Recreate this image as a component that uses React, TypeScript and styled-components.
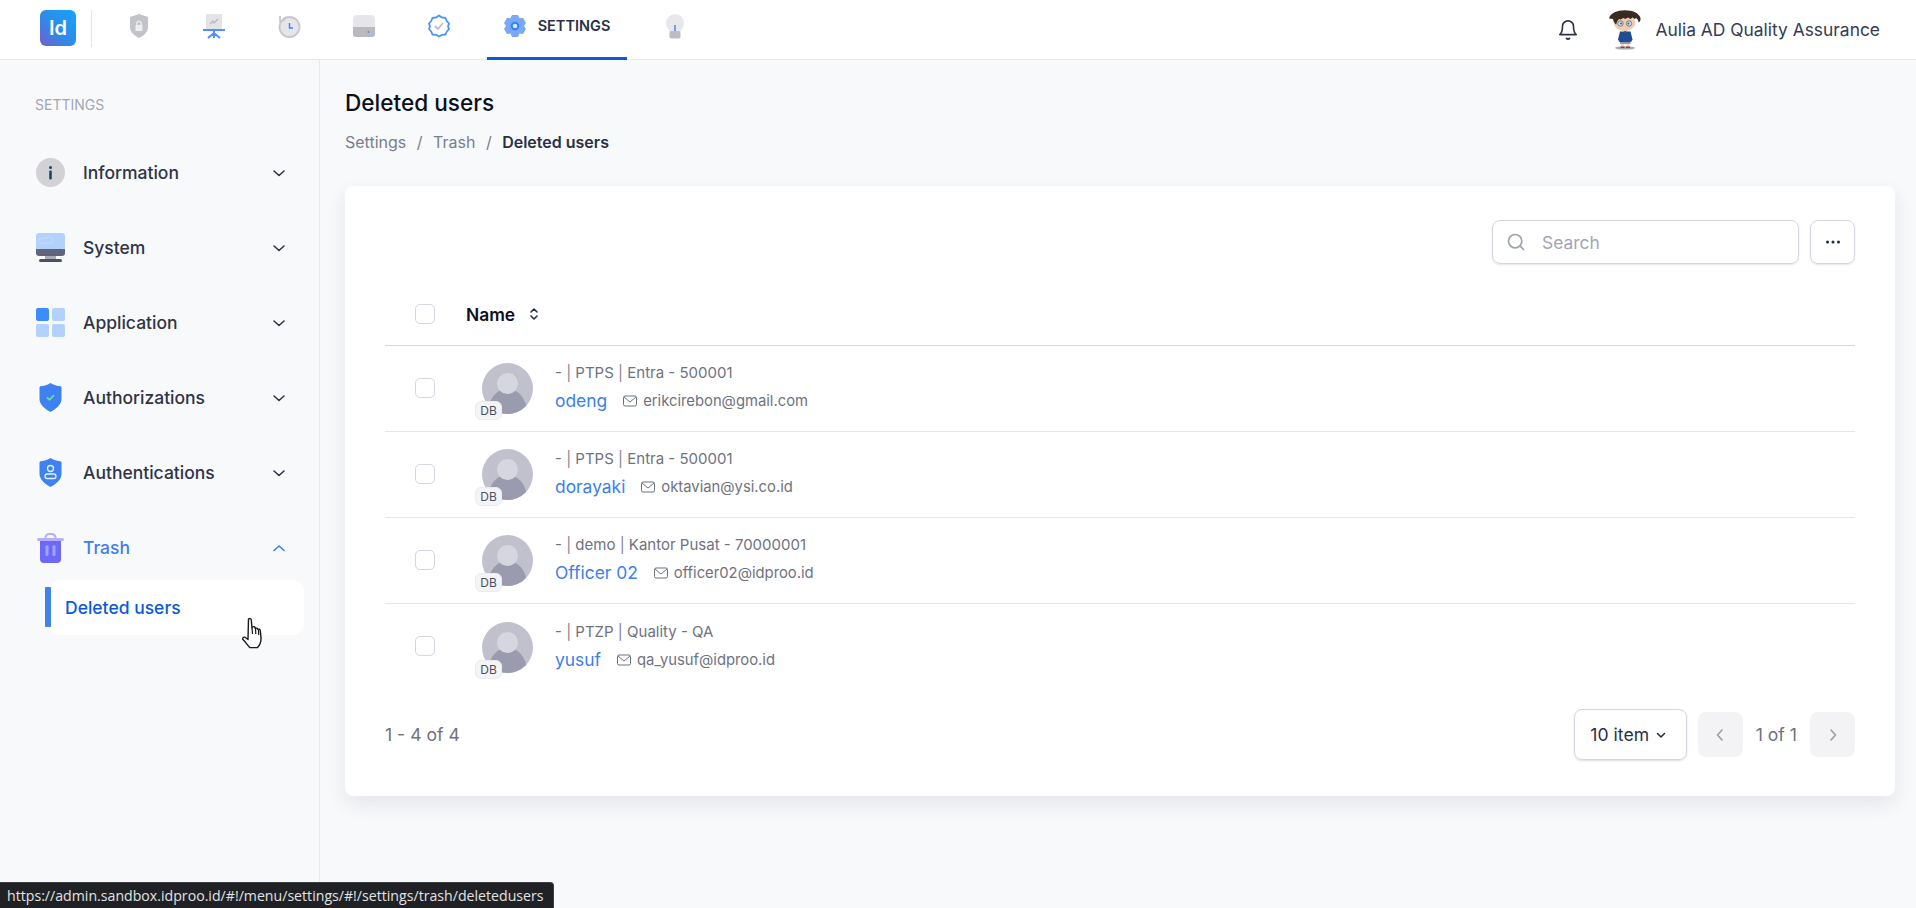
import React from "react";
import styled, { createGlobalStyle } from "styled-components";

const GlobalStyle = createGlobalStyle`
  * { box-sizing: border-box; }
  html, body {
    margin: 0;
    padding: 0;
    height: 100%;
    background: #f8f9fb;
    font-family: "Inter", "Liberation Sans", sans-serif;
    color: #2f3447;
    overflow: hidden;
  }
`;

const users = [
  { name: "odeng", org: "PTPS", unit: "Entra - 500001", email: "erikcirebon@gmail.com" },
  { name: "dorayaki", org: "PTPS", unit: "Entra - 500001", email: "oktavian@ysi.co.id" },
  { name: "Officer 02", org: "demo", unit: "Kantor Pusat - 70000001", email: "officer02@idproo.id" },
  { name: "yusuf", org: "PTZP", unit: "Quality - QA", email: "qa_yusuf@idproo.id" },
];

const Chevron = ({ up }: { up?: boolean }) => (
  <svg width="20" height="20" viewBox="0 0 20 20" fill="none" stroke="currentColor" strokeWidth="1.6" strokeLinecap="round" strokeLinejoin="round">
    <path d={up ? "M5 12.5 10 8l5 4.5" : "M5 8l5 4.5L15 8"} />
  </svg>
);

const ShieldTopIcon = () => (
  <svg width="22" height="26" viewBox="0 0 22 26">
    <path d="M11 1 20 4v10c0 5-4 8.500-9 11C6 22.500 2 19 2 14V4z" fill="#c2c3c9" />
    <path d="M7.500 12h7v6h-7z" fill="#eeeef1" />
    <path d="M8.800 12V10.500a2.200 2.200 0 0 1 4.400 0V12" fill="none" stroke="#eeeef1" strokeWidth="1.300" />
  </svg>
);

const BoardIcon = () => (
  <svg width="22" height="26" viewBox="0 0 22 26">
    <rect x="3" y="1" width="16" height="15" fill="#e4e4e7" />
    <path d="M7 11l3-3 1 2 4-4" fill="none" stroke="#b5b5bb" strokeWidth="1.300" />
    <rect x="0" y="16" width="22" height="2" fill="#4a90ff" />
    <path d="M11 18v3M11 20 5 25M11 20l6 5M11 21v4" stroke="#4a90ff" strokeWidth="2" fill="none" />
  </svg>
);

const ClockIcon = () => (
  <svg width="24" height="26" viewBox="0 0 24 26">
    <circle cx="12.500" cy="14" r="10" fill="#e6e6ea" stroke="#c6c6cc" strokeWidth="1.800" />
    <path d="M3 9V3M3 8.500 8 7" stroke="#c6c6cc" strokeWidth="1.800" fill="none" />
    <path d="M12.500 10v5h3.500" stroke="#3f86f5" strokeWidth="1.500" fill="none" />
  </svg>
);

const DriveIcon = () => (
  <svg width="22" height="24" viewBox="0 0 22 24">
    <path d="M4 1h14a4 4 0 0 1 4 4v9H0V5a4 4 0 0 1 4-4z" fill="#e6e6e8" />
    <path d="M0 13h22v7a3 3 0 0 1-3 3H3a3 3 0 0 1-3-3z" fill="#b9b9c0" />
    <circle cx="15.500" cy="18" r="1" fill="#4a90ff" />
  </svg>
);

const BadgeIcon = () => (
  <svg width="22" height="24" viewBox="0 0 22 24">
    <path d="M11 1.500 14 3.500 17.500 3.800 18.800 7 21 9.500 20 12.500 21 15 18.800 17.500 17.500 20.500 14 20.800 11 22.500 8 20.800 4.500 20.500 3.200 17.500 1 15 2 12.500 1 9.500 3.200 7 4.500 3.800 8 3.500z" fill="#fff" stroke="#4a90ff" strokeWidth="1.800" strokeLinejoin="round" />
    <path d="M7 12l3 3 5-6" fill="none" stroke="#bdbdc3" strokeWidth="1.800" />
  </svg>
);

const GearIcon = () => (
  <svg width="22" height="24" viewBox="0 0 22 24">
    <path d="M8 1h6l1.500 3.200 3.500-.4 3 5.200-2 2.900 2 3-3 5.100-3.500-.4L14 23H8l-1.500-3.400-3.500.4-3-5.100 2-3-2-2.900 3-5.200 3.500.4z" fill="#79a9f5" />
    <circle cx="11" cy="12" r="4.200" fill="#2f7ff5" />
    <circle cx="11" cy="12" r="2.300" fill="#dbe8fc" />
  </svg>
);

const BulbIcon = () => (
  <svg width="20" height="26" viewBox="0 0 20 26">
    <path d="M10 1a9 9 0 0 1 9 9c0 4-2.500 5.500-3.500 9h-11C3.500 15.500 1 14 1 10a9 9 0 0 1 9-9z" fill="#e8e8ec" />
    <rect x="4.500" y="18" width="11" height="7.500" rx="2" fill="#bcbcc4" />
    <path d="M10 12v6" stroke="#3f86f5" strokeWidth="1.500" />
  </svg>
);

const ConanAvatar = () => (
  <svg width="34" height="40" viewBox="0 0 34 40">
    <ellipse cx="17" cy="38" rx="10" ry="1.600" fill="#a9a9a9" />
    <path d="M13 32h3v5h-3zM18.500 32h3v5h-3z" fill="#efd9c6" />
    <path d="M12 31h10.500v3H12z" fill="#8d9aa8" />
    <path d="M12.500 36.500h4v1.500h-4zM18 36.500h4v1.500h-4z" fill="#8f3f38" />
    <path d="M12 21.500h10.500l2 8-1.500 2.500H11.500L10 29.500z" fill="#1f4c92" />
    <path d="M15.500 20.500h3.500l-1.700 2.500z" fill="#c3362d" />
    <path d="M5.500 12c0-3 5-6 11-6s11 3 11 6c0 5-5 9-11 9s-11-4-11-9z" fill="#f1cdae" />
    <path d="M1 8.500C2.500 3 9 .3 17 .3c7.500 0 14 2.700 15.500 7.700.3 2-.5 3.500-1.800 4.500-.3-1.800-1-3.400-2.500-4.500l-2 1-1.500-1.500-2.500 1.500-2-1.500-3 1.500-2-1-2.500 1.500-1.500-.5c-1.500 1.300-2.500 3-3 5.500-1.700-1.300-2.700-3-3.200-5.500z" fill="#3b2a20" />
    <circle cx="12.500" cy="13.500" r="2.700" fill="#cfe0ee" stroke="#4a5166" strokeWidth=".7" />
    <circle cx="21" cy="13.500" r="2.700" fill="#cfe0ee" stroke="#4a5166" strokeWidth=".7" />
    <circle cx="13" cy="13.500" r="1" fill="#3a5f9c" />
    <circle cx="20.500" cy="13.500" r="1" fill="#3a5f9c" />
  </svg>
);

const InfoIcon = () => (
  <svg width="29" height="29" viewBox="0 0 29 29">
    <circle cx="14.500" cy="14.500" r="14.500" fill="#d2d2d4" />
    <circle cx="14.500" cy="9.500" r="1.500" fill="#1d4560" />
    <rect x="13.200" y="12.500" width="2.600" height="9" rx="1" fill="#1d4560" />
  </svg>
);

const SystemIcon = () => (
  <svg width="29" height="29" viewBox="0 0 29 29">
    <path d="M3 0h23a3 3 0 0 1 3 3v13H0V3a3 3 0 0 1 3-3z" fill="#b2d1fd" />
    <path d="M3 10h12c2 0 2.500-1.500 2-3-.5-2-2-3-4-3-2 0-3 .5-4 1.500C5 5 1 6.500 1 9" fill="none" stroke="#cfe1fc" strokeWidth=".7" />
    <path d="M0 16h29v4a3 3 0 0 1-3 3H3a3 3 0 0 1-3-3z" fill="#61647a" />
    <rect x="9" y="23" width="11" height="3" fill="#a9abb6" />
    <rect x="3" y="26" width="23" height="3" rx="1.500" fill="#4d5064" />
  </svg>
);

const AppIcon = () => (
  <svg width="29" height="29" viewBox="0 0 29 29">
    <rect width="13" height="13" rx="2" fill="#3d8bfd" />
    <rect x="16" width="13" height="13" rx="2" fill="#b2d1fd" />
    <rect y="16" width="13" height="13" rx="2" fill="#b2d1fd" />
    <rect x="16" y="16" width="13" height="13" rx="2" fill="#b2d1fd" />
  </svg>
);

const ShieldIcon = ({ user }: { user?: boolean }) => (
  <svg width="29" height="29" viewBox="0 0 29 29">
    <path d="M14.500 0c2 1.500 5.500 3 9.500 3.200 1 0 1.500.5 1.500 1.500v11c0 6-5.500 10-11 13.300C9 25.700 3.500 21.700 3.500 15.700v-11c0-1 .5-1.500 1.500-1.500 4-.2 7.500-1.700 9.500-3.200z" fill="#3d82f0" />
    {user ? (
      <g fill="none" stroke="#e8f0fe" strokeWidth="1.300">
        <circle cx="14.500" cy="10.500" r="3" />
        <rect x="9" y="16" width="11" height="4.500" rx="2.250" />
      </g>
    ) : (
      <path d="M11 14.500l2.500 2.300 4.500-4.600" fill="none" stroke="#6fe08a" strokeWidth="1.800" />
    )}
  </svg>
);

const TrashIcon = () => (
  <svg width="29" height="30" viewBox="0 0 29 30">
    <path d="M9.500 5V4a4 4 0 0 1 4-3h2a4 4 0 0 1 4 3v1" fill="none" stroke="#b4b0fb" strokeWidth="2" />
    <rect x="1" y="5" width="27" height="3" rx="1.500" fill="#b4b0fb" />
    <path d="M4 8h21v18a4 4 0 0 1-4 4H8a4 4 0 0 1-4-4z" fill="#6c68fa" />
    <rect x="9.500" y="12" width="3" height="11" rx="1.500" fill="#a5a2fb" />
    <rect x="16.500" y="12" width="3" height="11" rx="1.500" fill="#a5a2fb" />
  </svg>
);

const MailIcon = () => (
  <svg width="14" height="12" viewBox="0 0 14 12" fill="none" stroke="#6b7280" strokeWidth="1">
    <rect x=".5" y="1" width="13" height="10" rx="1.500" />
    <path d="M1 2l6 5 6-5" />
  </svg>
);

const PersonAvatar = () => (
  <svg width="51" height="51" viewBox="0 0 51 51">
    <defs>
      <clipPath id="avatar-clip">
        <circle cx="25.500" cy="25.500" r="25.500" />
      </clipPath>
    </defs>
    <g clipPath="url(#avatar-clip)">
      <rect width="51" height="51" fill="#c0c1cc" />
      <ellipse cx="25.500" cy="47" rx="19" ry="21" fill="#9a9bae" />
      <circle cx="25.500" cy="20.500" r="10.500" fill="#d5d6df" />
    </g>
  </svg>
);

const HandCursor = () => (
  <svg width="22" height="32" viewBox="0 0 22 32">
    <path
      d="M6.500 2c1.200-1 2.600-.5 2.800 1l.7 8 .5-1c1.200-.8 2.400-.3 2.600.8l.2.7c1-.8 2.200-.3 2.500.9 1-.6 2.300-.2 2.500 1.200l.7 7c.2 4-1.500 8-3.500 10H8c-2-1.500-4-5-7-8-.8-1.500.5-3 2-2.300l3 2.200z"
      fill="#fff"
      stroke="#1a1a1a"
      strokeWidth="1.400"
      strokeLinejoin="round"
    />
    <path d="M10 11l.5 6M13.500 11l.3 6M16.500 13l.2 5" stroke="#1a1a1a" strokeWidth="1.200" fill="none" />
  </svg>
);

const App = () => {
  return (
    <>
      <GlobalStyle />
      <Page>
        <Header>
          <Logo>
            <span>Id</span>
          </Logo>
          <HeaderDivider />
          <Tabs>
            <Tab><ShieldTopIcon /></Tab>
            <Tab><BoardIcon /></Tab>
            <Tab><ClockIcon /></Tab>
            <Tab><DriveIcon /></Tab>
            <Tab><BadgeIcon /></Tab>
            <Tab $active>
              <GearIcon />
              <TabLabel>SETTINGS</TabLabel>
            </Tab>
            <Tab><BulbIcon /></Tab>
          </Tabs>
          <UserArea>
            <Bell>
              <svg width="22" height="22" viewBox="0 0 24 24" fill="none" stroke="#2f3447" strokeWidth="1.800" strokeLinecap="round" strokeLinejoin="round">
                <path d="M6 8a6 6 0 0 1 12 0c0 7 3 9 3 9H3s3-2 3-9" />
                <path d="M10.300 21a1.940 1.940 0 0 0 3.400 0" />
              </svg>
            </Bell>
            <AvatarImage><ConanAvatar /></AvatarImage>
            <UserName>Aulia AD Quality Assurance</UserName>
          </UserArea>
        </Header>
        <Body>
          <Sidebar>
            <SideTitle>SETTINGS</SideTitle>
            <SideItem>
              <SideIcon><InfoIcon /></SideIcon>
              <SideLabel>Information</SideLabel>
              <Chevron />
            </SideItem>
            <SideItem>
              <SideIcon><SystemIcon /></SideIcon>
              <SideLabel>System</SideLabel>
              <Chevron />
            </SideItem>
            <SideItem>
              <SideIcon><AppIcon /></SideIcon>
              <SideLabel>Application</SideLabel>
              <Chevron />
            </SideItem>
            <SideItem>
              <SideIcon><ShieldIcon /></SideIcon>
              <SideLabel>Authorizations</SideLabel>
              <Chevron />
            </SideItem>
            <SideItem>
              <SideIcon><ShieldIcon user /></SideIcon>
              <SideLabel>Authentications</SideLabel>
              <Chevron />
            </SideItem>
            <SideItem $open>
              <SideIcon><TrashIcon /></SideIcon>
              <SideLabel>Trash</SideLabel>
              <Chevron up />
            </SideItem>
            <SubItem>
              <SubMarker />
              Deleted users
              <CursorSpot><HandCursor /></CursorSpot>
            </SubItem>
          </Sidebar>
          <Main>
            <Title>Deleted users</Title>
            <Crumbs>
              <span>Settings</span>
              <CrumbSlash>/</CrumbSlash>
              <span>Trash</span>
              <CrumbSlash>/</CrumbSlash>
              <CrumbCurrent>Deleted users</CrumbCurrent>
            </Crumbs>
            <Card>
              <Toolbar>
                <SearchBox>
                  <svg width="20" height="20" viewBox="0 0 24 24" fill="none" stroke="#9ca3af" strokeWidth="2" strokeLinecap="round">
                    <circle cx="11" cy="11" r="8" />
                    <path d="m21 21-4.300-4.300" />
                  </svg>
                  <SearchText>Search</SearchText>
                </SearchBox>
                <MoreButton>
                  <svg width="16" height="4" viewBox="0 0 16 4" fill="#1f2a44">
                    <circle cx="2.500" cy="2" r="1.500" />
                    <circle cx="8" cy="2" r="1.500" />
                    <circle cx="13.500" cy="2" r="1.500" />
                  </svg>
                </MoreButton>
              </Toolbar>
              <HeadRow>
                <CheckBox />
                <HeadName>Name</HeadName>
                <svg width="10" height="14" viewBox="0 0 10 14" fill="none" stroke="#1f2a44" strokeWidth="1.500" strokeLinecap="round" strokeLinejoin="round">
                  <path d="M2 5l3-3 3 3M2 9l3 3 3-3" />
                </svg>
              </HeadRow>
              {users.map((u) => (
                <UserRow key={u.name}>
                  <CheckBox />
                  <AvatarWrap>
                    <PersonAvatar />
                    <SourceBadge>DB</SourceBadge>
                  </AvatarWrap>
                  <UserInfo>
                    <MetaLine>- <Pipe>|</Pipe> {u.org} <Pipe>|</Pipe> {u.unit}</MetaLine>
                    <NameLine>
                      <UserLink>{u.name}</UserLink>
                      <MailIcon />
                      <Email>{u.email}</Email>
                    </NameLine>
                  </UserInfo>
                </UserRow>
              ))}
              <Footer>
                <Range>1 - 4 of 4</Range>
                <Pager>
                  <PageSize>
                    10 item
                    <svg width="12" height="12" viewBox="0 0 12 12" fill="none" stroke="#1f2a44" strokeWidth="1.500" strokeLinecap="round" strokeLinejoin="round">
                      <path d="M2.500 4.500 6 8l3.500-3.500" />
                    </svg>
                  </PageSize>
                  <PageArrow>
                    <svg width="10" height="14" viewBox="0 0 10 14" fill="none" stroke="#9a9ca8" strokeWidth="1.600" strokeLinecap="round" strokeLinejoin="round">
                      <path d="M7 2 2.500 7 7 12" />
                    </svg>
                  </PageArrow>
                  <PageCount>1 of 1</PageCount>
                  <PageArrow>
                    <svg width="10" height="14" viewBox="0 0 10 14" fill="none" stroke="#9a9ca8" strokeWidth="1.600" strokeLinecap="round" strokeLinejoin="round">
                      <path d="M3 2l4.500 5L3 12" />
                    </svg>
                  </PageArrow>
                </Pager>
              </Footer>
            </Card>
          </Main>
        </Body>
        <StatusBubble>https://admin.sandbox.idproo.id/#!/menu/settings/#!/settings/trash/deletedusers</StatusBubble>
      </Page>
    </>
  );
};

const Page = styled.div`
  width: 1916px;
  height: 908px;
  display: flex;
  flex-direction: column;
  position: relative;
  overflow: hidden;
`;

const Header = styled.header`
  height: 60px;
  flex: none;
  display: flex;
  align-items: stretch;
  padding-left: 40px;
  background: #fff;
  border-bottom: 1px solid #e8e9ee;
`;

const Logo = styled.div`
  width: 36px;
  height: 36px;
  margin-top: 10px;
  border-radius: 6px;
  background: linear-gradient(45deg, #7060cf 0%, #2f8ae8 45%, #12a5fb 100%);
  display: flex;
  align-items: center;
  justify-content: center;
  color: #fff;
  font-size: 20px;
  font-weight: 600;
`;

const HeaderDivider = styled.div`
  width: 1px;
  height: 37px;
  margin: 10px 20px 0 15px;
  background: #e3e4e8;
`;

const Tabs = styled.nav`
  display: flex;
  gap: 21px;
`;

const Tab = styled.div<{ $active?: boolean }>`
  width: ${(p) => (p.$active ? "140px" : "54px")};
  height: 60px;
  padding-bottom: 6px;
  display: flex;
  align-items: center;
  justify-content: center;
  gap: 12px;
  border-bottom: 3px solid ${(p) => (p.$active ? "#0a5ad8" : "transparent")};
`;

const TabLabel = styled.span`
  font-size: 14.5px;
  font-weight: 600;
  color: #2a2f45;
`;

const UserArea = styled.div`
  margin-left: auto;
  padding-right: 36px;
  display: flex;
  align-items: center;
`;

const Bell = styled.div`
  display: flex;
  margin-right: 29px;
`;

const AvatarImage = styled.div`
  display: flex;
  margin-right: 13px;
`;

const UserName = styled.span`
  font-size: 17.4px;
  color: #353b52;
`;

const Body = styled.div`
  flex: 1;
  display: flex;
  min-height: 0;
`;

const Sidebar = styled.aside`
  width: 320px;
  flex: none;
  padding-top: 36px;
  border-right: 1px solid #e8e9ee;
`;

const SideTitle = styled.div`
  height: 18px;
  line-height: 18px;
  margin: 0 0 21px 35px;
  font-size: 14px;
  color: #a2a5b5;
`;

const SideItem = styled.div<{ $open?: boolean }>`
  height: 75px;
  padding: 0 30px 0 36px;
  display: flex;
  align-items: center;
  color: ${(p) => (p.$open ? "#3d7ff0" : "#2f3447")};
`;

const SideIcon = styled.span`
  width: 29px;
  height: 30px;
  display: flex;
  align-items: center;
  justify-content: center;
  margin-right: 18px;
`;

const SideLabel = styled.span`
  flex: 1;
  font-size: 17.5px;
  font-weight: 500;
`;

const SubItem = styled.div`
  position: relative;
  height: 55px;
  margin: -5px 15px 0 49px;
  padding-left: 16px;
  display: flex;
  align-items: center;
  background: #fff;
  border-radius: 12px;
  color: #0a5ad8;
  font-size: 17.5px;
  font-weight: 500;
`;

const SubMarker = styled.span`
  position: absolute;
  left: -4px;
  top: 7px;
  width: 6px;
  height: 40px;
  border-radius: 1px;
  background: #4480ea;
`;

const CursorSpot = styled.span`
  position: absolute;
  left: 193px;
  top: 37px;
  display: flex;
`;

const Main = styled.main`
  flex: 1;
  min-width: 0;
  padding: 0 21px 0 25px;
`;

const Title = styled.h1`
  margin: 28px 0 0;
  height: 30px;
  line-height: 30px;
  font-size: 22.6px;
  font-weight: 500;
  color: #0c0f1c;
`;

const Crumbs = styled.div`
  margin-top: 12px;
  height: 24px;
  display: flex;
  align-items: center;
  font-size: 16px;
  color: #7a7e8c;
`;

const CrumbSlash = styled.span`
  margin: 0 10.5px;
`;

const CrumbCurrent = styled.span`
  color: #2a2f45;
  font-weight: 600;
`;

const Card = styled.section`
  margin-top: 32px;
  height: 610px;
  padding: 34px 40px 0;
  background: #fff;
  border-radius: 8px;
  box-shadow: 0 8px 20px rgba(30, 34, 60, 0.09);
`;

const Toolbar = styled.div`
  display: flex;
  justify-content: flex-end;
  gap: 11px;
`;

const SearchBox = styled.div`
  width: 307px;
  height: 44px;
  padding-left: 13px;
  display: flex;
  align-items: center;
  gap: 16px;
  border: 1px solid #d5d7e0;
  border-radius: 8px;
  box-shadow: 0 1px 2px rgba(30, 34, 60, 0.12);
`;

const SearchText = styled.span`
  font-size: 17.4px;
  color: #a3a6b4;
`;

const MoreButton = styled.div`
  width: 45px;
  height: 44px;
  display: flex;
  align-items: center;
  justify-content: center;
  border: 1px solid #d5d7e0;
  border-radius: 8px;
  box-shadow: 0 1px 2px rgba(30, 34, 60, 0.12);
`;

const HeadRow = styled.div`
  margin-top: 21px;
  height: 61px;
  padding: 0 0 2px 30px;
  display: flex;
  align-items: center;
  border-bottom: 1px solid #d6d7dd;
`;

const CheckBox = styled.span`
  width: 20px;
  height: 20px;
  flex: none;
  border: 1px solid #d5d7e0;
  border-radius: 5px;
  background: #fff;
`;

const HeadName = styled.span`
  margin: 0 14px 0 31px;
  font-size: 17.4px;
  font-weight: 600;
  color: #0c0f1c;
`;

const UserRow = styled.div`
  height: 86px;
  padding-left: 30px;
  display: flex;
  align-items: center;
  border-bottom: 1px solid #e6e7eb;

  &:nth-last-child(2) {
    border-bottom: none;
  }

  ${CheckBox} {
    margin-bottom: 2px;
  }
`;

const AvatarWrap = styled.div`
  position: relative;
  width: 51px;
  height: 51px;
  margin: 0 22px 0 47px;
`;

const SourceBadge = styled.span`
  position: absolute;
  left: -7px;
  top: 38px;
  width: 27px;
  height: 19px;
  display: flex;
  align-items: center;
  justify-content: center;
  border: 1px solid #ececf0;
  border-radius: 6px;
  background: #f4f4f6;
  color: #4b5063;
  font-size: 12px;
`;

const UserInfo = styled.div`
  margin-bottom: 2px;
  display: flex;
  flex-direction: column;
  gap: 7px;
`;

const MetaLine = styled.div`
  font-size: 15px;
  line-height: 20px;
  color: #6f7280;
`;

const Pipe = styled.span`
  color: #8a7f8a;
`;

const NameLine = styled.div`
  display: flex;
  align-items: center;
  line-height: 22px;
`;

const UserLink = styled.span`
  margin-right: 16px;
  font-size: 17.4px;
  color: #3b7fee;
`;

const Email = styled.span`
  margin-left: 6px;
  font-size: 14.8px;
  color: #6f7280;
`;

const Footer = styled.div`
  margin-top: 19px;
  display: flex;
  align-items: center;
  justify-content: space-between;
`;

const Range = styled.span`
  font-size: 17.6px;
  color: #6f7280;
`;

const Pager = styled.div`
  display: flex;
  align-items: center;
`;

const PageSize = styled.div`
  width: 113px;
  height: 51px;
  margin-right: 11px;
  display: flex;
  align-items: center;
  justify-content: center;
  gap: 6px;
  padding-right: 3px;
  border: 1px solid #d5d7e0;
  border-radius: 8px;
  box-shadow: 0 1px 2px rgba(30, 34, 60, 0.15);
  font-size: 17.6px;
  color: #2a2f45;
`;

const PageArrow = styled.div`
  width: 45px;
  height: 45px;
  display: flex;
  align-items: center;
  justify-content: center;
  border-radius: 8px;
  background: #f3f3f5;
`;

const PageCount = styled.span`
  margin: 0 13px;
  font-size: 17.6px;
  color: #6f7280;
`;

const StatusBubble = styled.div`
  position: absolute;
  left: 0;
  bottom: 0;
  width: 554px;
  height: 26px;
  padding-left: 7px;
  display: flex;
  align-items: center;
  background: #202124;
  border-top: 1px solid #3c3d40;
  border-right: 1px solid #3c3d40;
  border-top-right-radius: 4px;
  color: #e2e3e5;
  font-family: "Open Sans", "Noto Sans", sans-serif;
  font-size: 14.15px;
  white-space: nowrap;
`;

export default App;
